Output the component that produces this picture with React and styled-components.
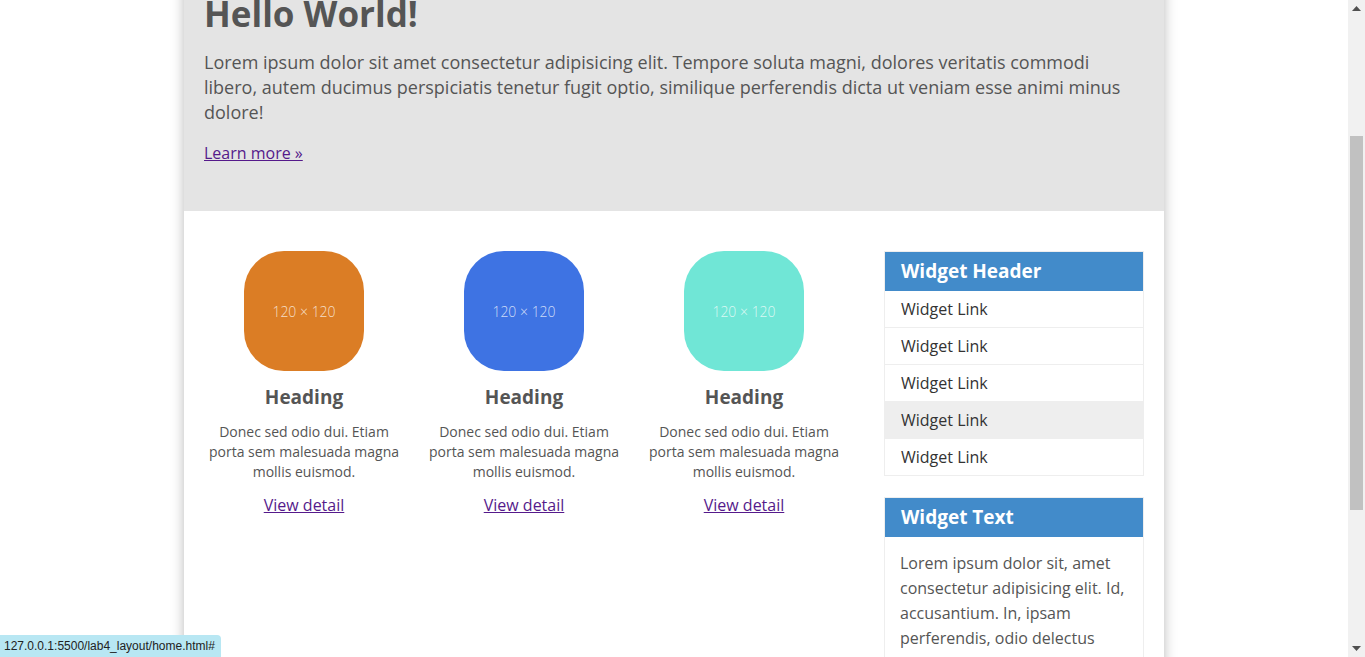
import React, { useLayoutEffect, useRef } from 'react'
import styled, { createGlobalStyle } from 'styled-components'

const GlobalStyle = createGlobalStyle`
    html, body {
        margin: 0;
        padding: 0;
        height: 100%;
        overflow: hidden;
    }
    body {
        font-family: "Open Sans", "Noto Sans", sans-serif;
        color: #555;
        background-color: #fff;
    }
    a {
        color: #551a8b;
    }
`;

const Screen = styled.div`
    display: flex;
    height: 100vh;
    width: 100vw;
`;

const Viewport = styled.div`
    flex: 1;
    height: 100%;
    overflow-y: scroll;
    scrollbar-width: none;

    &::-webkit-scrollbar {
        display: none;
    }
`;

const Page = styled.div`
    width: 980px;
    margin: 0 auto;
    background-color: #fff;
    box-shadow: 0 0 12px rgba(0, 0, 0, 0.28);
    min-height: 1100px;
`;

const Hero = styled.header`
    background-color: #e4e4e4;
    padding: 30px 20px 45px;

    h1 {
        margin: 0 0 12px;
        font-size: 35px;
        font-weight: 700;
        line-height: 49px;
    }
    p {
        margin: 0 0 16px;
        font-size: 18px;
        line-height: 25px;
    }
    p:last-child {
        margin-bottom: 0;
        font-size: 16px;
    }
`;

const Content = styled.main`
    display: grid;
    grid-template-columns: 640px 260px;
    gap: 40px;
    padding: 40px 20px;
`;

const Features = styled.section`
    display: grid;
    grid-template-columns: repeat(3, 200px);
    gap: 20px;
    align-items: start;
`;

const Feature = styled.article`
    display: flex;
    flex-direction: column;
    align-items: center;
    text-align: center;

    h2 {
        margin: 13px 0 11px;
        font-size: 19px;
        font-weight: 700;
        line-height: 27px;
    }
    p {
        margin: 0 0 11px;
        font-size: 14px;
        line-height: 20px;
    }
    a {
        font-size: 16px;
        line-height: 24px;
    }
`;

const Placeholder = styled.div`
    display: flex;
    align-items: center;
    justify-content: center;
    width: 120px;
    height: 120px;
    border-radius: 40px;
    background-color: ${props => props.$color};
    color: rgba(255, 255, 255, 0.75);
    font-size: 14px;
    font-weight: 300;
`;

const Sidebar = styled.aside`
    display: flex;
    flex-direction: column;
    gap: 21px;
`;

const Widget = styled.section`
    border: 1px solid #eee;
`;

const WidgetHeader = styled.h3`
    margin: 0;
    padding: 6px 16px;
    background-color: #428bca;
    color: #fff;
    font-size: 19px;
    font-weight: 700;
    line-height: 27px;
`;

const WidgetLink = styled.a`
    display: block;
    padding: 6px 16px;
    border-top: 1px solid #eee;
    font-size: 16px;
    line-height: 24px;
    color: #333;
    text-decoration: none;
    background-color: ${props => (props.$hover ? '#eee' : '#fff')};

    &:first-of-type {
        border-top: none;
    }
`;

const WidgetBody = styled.p`
    margin: 0;
    padding: 14px 15px;
    font-size: 16px;
    line-height: 25px;
`;

const ScrollTrack = styled.div`
    width: 17px;
    height: 100%;
    background-color: #f1f1f1;
    display: flex;
    flex-direction: column;
    align-items: center;
`;

const ScrollArrow = styled.div`
    height: 17px;
    width: 17px;
    display: flex;
    align-items: center;
    justify-content: center;
    flex-shrink: 0;
`;

const ScrollSpace = styled.div`
    flex: 1;
    width: 100%;
    display: flex;
    flex-direction: column;
    align-items: center;
`;

const ScrollThumb = styled.div`
    width: 13px;
    background-color: #c1c1c1;
`;

const StatusBubble = styled.div`
    position: fixed;
    left: 0;
    bottom: 0;
    padding: 3px 6px 3px 4px;
    background-color: #b8e7f3;
    border-top-right-radius: 4px;
    font-family: "Liberation Sans", Arial, sans-serif;
    font-size: 12px;
    line-height: 16px;
    color: #222;
`;

const features = [
    { color: '#db7d25' },
    { color: '#3e73e3' },
    { color: '#70e6d6' },
];

function Arrow({ down }) {
    return (
        <svg width="9" height="5" viewBox="0 0 9 5">
            <path d={down ? 'M0 0H9L4.5 5Z' : 'M0 5H9L4.5 0Z'} fill="#505050" />
        </svg>
    )
}

function App() {
    const viewRef = useRef(null)

    // The screenshot is taken part way down the page
    useLayoutEffect(() => {
        if (viewRef.current) viewRef.current.scrollTop = 41
    }, [])

    return (
        <Screen>
            <GlobalStyle />
            <Viewport ref={viewRef}>
                <Page>
                    <Hero>
                        <h1>Hello World!</h1>
                        <p>
                            Lorem ipsum dolor sit amet consectetur adipisicing elit. Tempore soluta magni, dolores
                            veritatis commodi libero, autem ducimus perspiciatis tenetur fugit optio, similique
                            perferendis dicta ut veniam esse animi minus dolore!
                        </p>
                        <p><a href="#">Learn more »</a></p>
                    </Hero>
                    <Content>
                        <Features>
                            {features.map((f, i) => (
                                <Feature key={i}>
                                    <Placeholder $color={f.color}>120 × 120</Placeholder>
                                    <h2>Heading</h2>
                                    <p>Donec sed odio dui. Etiam porta sem malesuada magna mollis euismod.</p>
                                    <a href="#">View detail</a>
                                </Feature>
                            ))}
                        </Features>
                        <Sidebar>
                            <Widget>
                                <WidgetHeader>Widget Header</WidgetHeader>
                                {[0, 1, 2, 3, 4].map(i => (
                                    <WidgetLink key={i} href="#" $hover={i === 3}>Widget Link</WidgetLink>
                                ))}
                            </Widget>
                            <Widget>
                                <WidgetHeader>Widget Text</WidgetHeader>
                                <WidgetBody>
                                    Lorem ipsum dolor sit, amet consectetur adipisicing elit. Id, accusantium. In,
                                    ipsam perferendis, odio delectus nihil laboriosam iusto dignissimos quae, sequi
                                    eveniet. Adipisci, voluptates.
                                </WidgetBody>
                            </Widget>
                        </Sidebar>
                    </Content>
                </Page>
            </Viewport>
            <ScrollTrack>
                <ScrollArrow><Arrow /></ScrollArrow>
                <ScrollSpace>
                    <div style={{ height: 119 }} />
                    <ScrollThumb style={{ height: 374 }} />
                </ScrollSpace>
                <ScrollArrow><Arrow down /></ScrollArrow>
            </ScrollTrack>
            <StatusBubble>127.0.0.1:5500/lab4_layout/home.html#</StatusBubble>
        </Screen>
    )
}

export default App
